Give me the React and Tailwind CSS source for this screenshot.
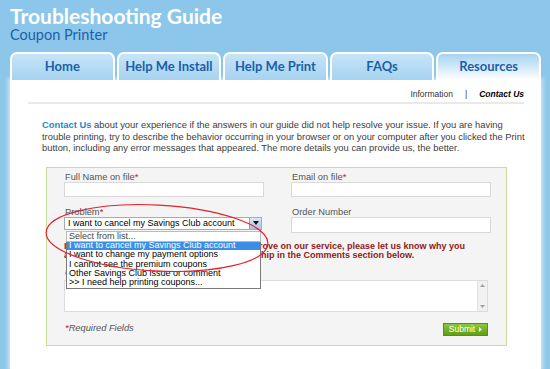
const tabs = ["Home", "Help Me Install", "Help Me Print", "FAQs", "Resources"];

const options = [
  "Select from list...",
  "I want to cancel my Savings Club account",
  "I want to change my payment options",
  "I cannot see the premium coupons",
  "Other Savings Club issue or comment",
  ">> I need help printing coupons...",
];

function Star() {
  return <span className="text-[#c4161c]">*</span>;
}

export default function App() {
  return (
    <div className="relative w-[550px] h-[369px] overflow-hidden bg-[#8cc7eb] font-['Lato',sans-serif]">
      <div className="pl-[10px] pt-[5px]">
        <div className="text-white text-[21px] font-bold leading-[22px]">Troubleshooting Guide</div>
        <div className="text-[#1d5fa9] text-[14.5px] leading-[16px]">Coupon Printer</div>
      </div>

      <div className="ml-[10px] mt-[9px] w-[531px] h-[28px] flex gap-[2px]">
        {tabs.map((t) => (
          <div
            key={t}
            className={
              t === "Resources"
                ? "flex-1 rounded-t-[7px] border-2 border-b-0 border-white bg-linear-to-b from-[#a6d3f1] to-white flex items-center justify-center text-[13px] font-bold text-[#1b5fab]"
                : "flex-1 rounded-t-[7px] border-2 border-b-0 border-white bg-linear-to-b from-[#c6e4f7] to-[#a5d3f0] flex items-center justify-center text-[13px] font-bold text-[#1b5fab]"
            }
          >
            {t}
          </div>
        ))}
      </div>

      <div className="ml-[10px] w-[531px] h-[289px] bg-white shadow-[0_0_4px_2px_rgba(255,255,255,0.55)] font-['Liberation_Sans',Arial,sans-serif]">
        <div className="flex justify-end pt-[9px] pr-[17px] leading-[10px] text-[8.5px] text-[#333]">
          <span>Information</span>
          <span className="mx-[12px]">|</span>
          <span className="font-bold italic text-black">Contact Us</span>
        </div>
        <div className="mt-[3px] ml-[18px] mr-[17px] h-[2px] bg-[#e9e9e9]"></div>

        <p className="ml-[32px] mt-[15px] text-[9.4px] leading-[11.5px] text-[#3c3c3c] whitespace-nowrap">
          <span className="font-bold text-[#1a8cc4]">Contact Us</span> about your experience if the answers in our guide did not help resolve your issue. If you are having
          <br />
          trouble printing, try to describe the behavior occurring in your browser or on your computer after you clicked the Print
          <br />
          button, including any error messages that appeared. The more details you can provide us, the better.
        </p>

        <div className="ml-[36px] mt-[13px] w-[461px] border border-[#c8de98] bg-[#f4f4f4] pl-[17px] pt-[4px] pb-[9px] text-[9.3px] text-[#555]">
          <div className="grid grid-cols-[200px_200px] gap-x-[27px]">
            <div>
              <div className="leading-[10px] pl-[1px]">Full Name on file<Star /></div>
              <div className="h-[15px] bg-white border border-[#d9d9d9]"></div>
            </div>
            <div>
              <div className="leading-[10px] pl-[1px]">Email on file<Star /></div>
              <div className="h-[15px] bg-white border border-[#d9d9d9]"></div>
            </div>

            <div className="mt-[10px]">
              <div className="leading-[10px] pl-[1px]">Problem<Star /></div>
              <div className="relative w-[198px]">
                <div className="h-[13px] bg-white border border-[#a5acb5] flex items-center">
                  <span className="flex-1 pl-[3px] text-[9px] leading-[11px] text-black whitespace-nowrap overflow-hidden">I want to cancel my Savings Club account</span>
                  <div className="w-[12px] h-full bg-linear-to-b from-[#dbe8f6] to-[#a9c3e2] border-l border-[#8ea6c4] flex items-center justify-center">
                    <svg width="6" height="4" viewBox="0 0 6 4"><path d="M0 0H6L3 4Z" fill="#111" /></svg>
                  </div>
                </div>
                <div className="absolute left-[2px] top-[14px] w-[195px] bg-white border border-[#7a7a7a] z-10 text-[9px] text-black">
                  {options.map((o, i) => (
                    <div
                      key={o}
                      className={
                        i === 1
                          ? "h-[9.4px] leading-[9.4px] pl-[2px] whitespace-nowrap bg-[#3a8ee6] text-white"
                          : i === 0
                          ? "h-[9.4px] leading-[9.4px] pl-[2px] whitespace-nowrap text-[#444] outline outline-[#bbb]"
                          : "h-[9.4px] leading-[9.4px] pl-[2px] whitespace-nowrap"
                      }
                    >
                      {o}
                    </div>
                  ))}
                </div>
              </div>
            </div>
            <div className="mt-[10px]">
              <div className="leading-[10px] pl-[1px]">Order Number</div>
              <div className="h-[16px] bg-white border border-[#d9d9d9]"></div>
            </div>
          </div>

          <div className="mt-[9px] leading-[9.5px] font-bold text-[#8e1b1b] text-[9px] whitespace-nowrap">
            If there is anything that you feel we could improve on our service, please let us know why you
            <br />
            are opting to end your Savings Club membership in the Comments section below.
          </div>

          <div className="mt-[7px] leading-[10px] pl-[1px]">Comments</div>
          <div className="mt-[2px] w-[424px] h-[32px] bg-white border border-[#dcdcdc] flex justify-end">
            <div className="w-[10px] h-full bg-[#f1f1f1] border-l border-[#e0e0e0] flex flex-col justify-between items-center py-[3px]">
              <svg width="5" height="3" viewBox="0 0 5 3"><path d="M0 3H5L2.5 0Z" fill="#a0a0a0" /></svg>
              <svg width="5" height="3" viewBox="0 0 5 3"><path d="M0 0H5L2.5 3Z" fill="#a0a0a0" /></svg>
            </div>
          </div>

          <div className="mt-[11px] w-[424px] h-[13px] flex items-center justify-between">
            <div className="italic text-[#555] pl-[1px]"><Star />Required Fields</div>
            <div className="w-[45px] h-[13px] bg-linear-to-b from-[#8cc63c] to-[#609e12] border border-[#5c8c1c] text-white text-[8.5px] flex items-center justify-center gap-[4px]">
              <span>Submit</span>
              <svg width="3" height="5" viewBox="0 0 3 5"><path d="M0 0L3 2.5L0 5Z" fill="#fff" /></svg>
            </div>
          </div>
        </div>
      </div>

      <svg className="absolute inset-0 pointer-events-none z-20" width="550" height="369">
        <ellipse cx="157" cy="238" rx="111" ry="33" transform="rotate(3 157 238)" fill="none" stroke="#e4202a" strokeWidth="1.2" />
      </svg>
    </div>
  );
}
